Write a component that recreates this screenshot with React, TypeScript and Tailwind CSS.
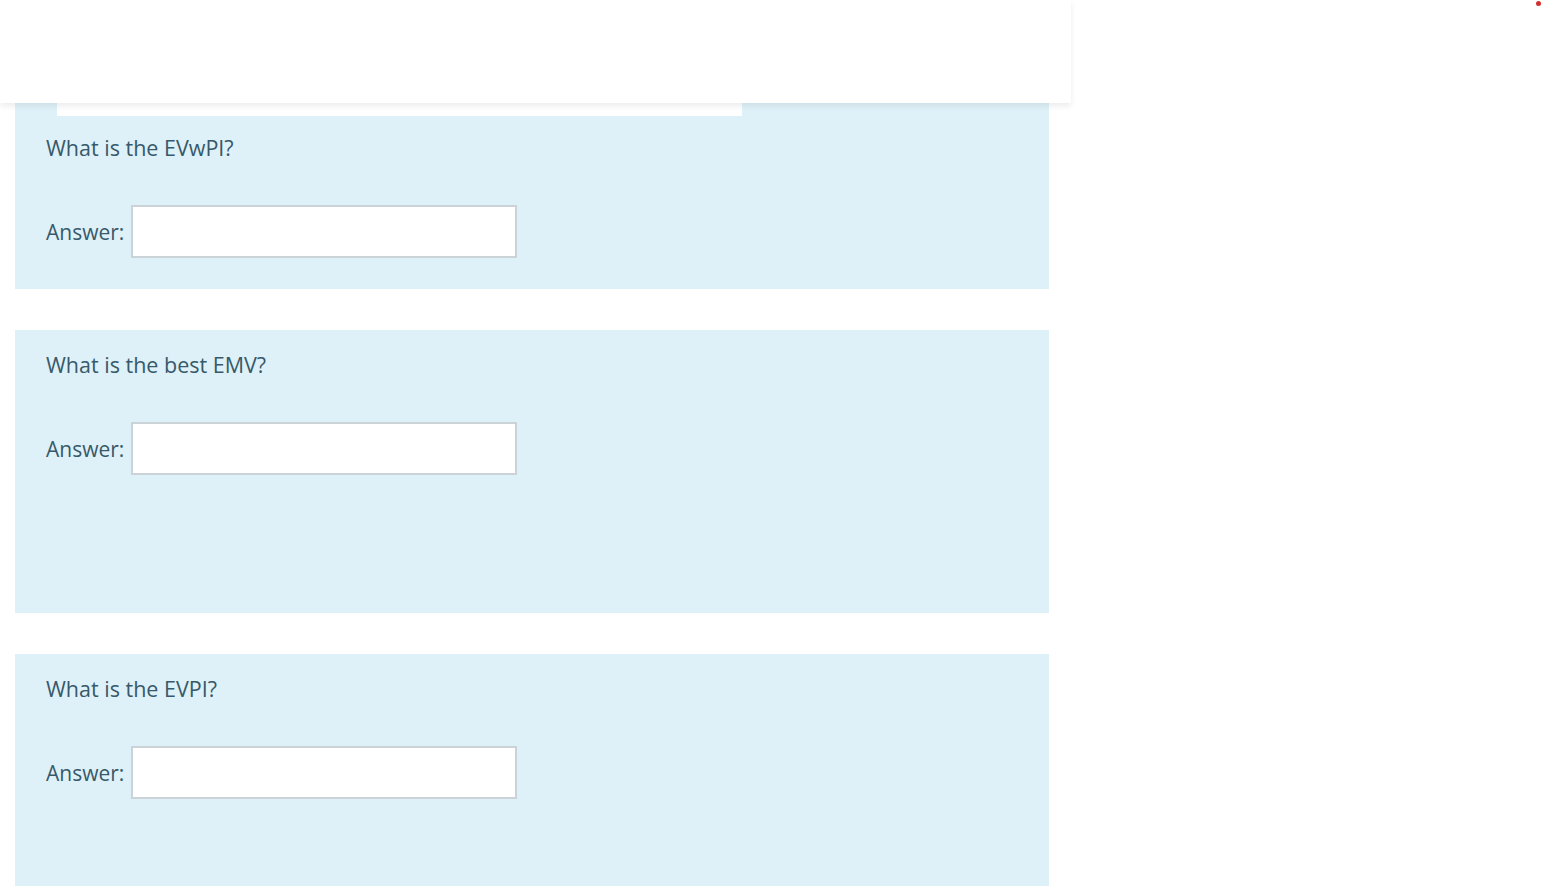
import React from "react"

type Question = {
  id: string
  text: string
  bottomPad: string
  lead?: boolean
}

const questions: Question[] = [
  { id: "evwpi", text: "What is the EVwPI?", bottomPad: "pb-[31px]", lead: true },
  { id: "emv", text: "What is the best EMV?", bottomPad: "pb-[138px]" },
  { id: "evpi", text: "What is the EVPI?", bottomPad: "pb-[138px]" },
]

function QuestionPanel({ q }: { q: Question }) {
  return (
    <div className={`bg-[#dff1f8] ${q.lead ? "" : "mt-[41px]"} ${q.bottomPad}`}>
      {q.lead && <div className="ml-[42px] w-[685px] h-[13px] bg-white" />}
      <div className={`pl-[31px] ${q.lead ? "pt-[17px]" : "pt-[20px]"}`}>
        <p className="text-[21.5px] leading-[30px] text-[#37596a]">{q.text}</p>
        <div className="mt-[42px] flex items-center gap-[7px]">
          <label htmlFor={q.id} className="text-[21px] leading-[30px] text-[#37596a]">
            Answer:
          </label>
          <input
            id={q.id}
            type="text"
            className="w-[386px] h-[53px] bg-white border-2 border-[#cbd3d8] outline-none px-2 text-[18px]"
          />
        </div>
      </div>
    </div>
  )
}

export default function App() {
  return (
    <div className="relative min-h-screen bg-white font-['Open_Sans','Noto_Sans',sans-serif]">
      <span className="absolute right-[2px] top-[1px] w-[5px] h-[5px] rounded-full bg-[#d32f2f]" />
      <header className="relative z-10 w-[1071px] h-[103px] bg-white shadow-[0_3px_6px_rgba(0,0,0,0.08)]" />
      <main className="ml-[15px] w-[1034px] pb-4">
        {questions.map(q => (
          <QuestionPanel key={q.id} q={q} />
        ))}
      </main>
    </div>
  )
}
